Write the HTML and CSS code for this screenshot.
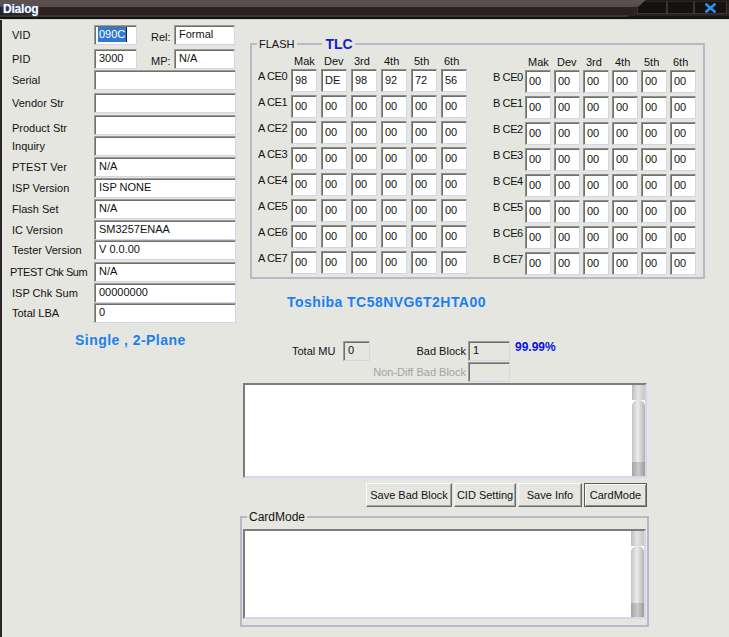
FILE: index.html
```html
<!DOCTYPE html>
<html lang="en">
<head>
  <meta charset="UTF-8">
  <title>Dialog</title>
  <link rel="stylesheet" href="styles.css">
</head>
<body>
  <div class="window">
    <div class="titlebar">
      <span class="title">Dialog</span>
      <div class="caption">
        <span class="cbtn min"></span>
        <span class="cbtn max"></span>
        <span class="cbtn close">
          <svg width="11" height="10" viewBox="0 0 11 10"><path d="M1.5 1.5 L9.5 8.5 M9.5 1.5 L1.5 8.5" stroke="#2a90e8" stroke-width="2.6" stroke-linecap="square"/></svg>
        </span>
      </div>
    </div>

    <div class="client">
      <!-- device info column -->
      <div class="info">
        <div class="form">
          <span class="lbl">VID</span>
          <div class="pair">
            <span class="field vid"><span class="sel">090C</span></span>
            <span class="sub">Rel:</span>
            <span class="field rel">Formal</span>
          </div>
          <span class="lbl">PID</span>
          <div class="pair">
            <span class="field vid">3000</span>
            <span class="sub">MP:</span>
            <span class="field rel">N/A</span>
          </div>
          <span class="lbl">Serial</span><span class="field"></span>
          <span class="lbl">Vendor Str</span><span class="field"></span>
          <span class="lbl low">Product Str</span><span class="field"></span>
          <span class="lbl">Inquiry</span><span class="field"></span>
          <span class="lbl">PTEST Ver</span><span class="field">N/A</span>
          <span class="lbl">ISP Version</span><span class="field">ISP NONE</span>
          <span class="lbl">Flash Set</span><span class="field">N/A</span>
          <span class="lbl">IC Version</span><span class="field">SM3257ENAA</span>
          <span class="lbl">Tester Version</span><span class="field">V 0.0.00</span>
          <span class="lbl shift">PTEST Chk Sum</span><span class="field">N/A</span>
          <span class="lbl">ISP Chk Sum</span><span class="field">00000000</span>
          <span class="lbl">Total LBA</span><span class="field">0</span>
        </div>
        <div class="mode">Single , 2-Plane</div>
      </div>

      <!-- flash / log column -->
      <div class="main">
        <fieldset class="flash">
          <legend><span>FLASH</span><span class="rule"></span><span class="tlc">TLC</span></legend>
          <div class="flash-body">
            <div class="ce-grid a" id="gridA"></div>
            <div class="ce-grid b" id="gridB"></div>
          </div>
        </fieldset>

        <div class="chip">Toshiba TC58NVG6T2HTA00</div>

        <div class="status-row">
          <span class="st-lbl mu">Total MU</span>
          <span class="field grey mu-box">0</span>
          <span class="st-lbl bb">Bad Block</span>
          <span class="field grey bb-box">1</span>
          <span class="pct">99.99%</span>
        </div>
        <div class="status-row second">
          <span class="st-lbl bb off">Non-Diff Bad Block</span>
          <span class="field grey bb-box"></span>
        </div>

        <div class="memo log">
          <div class="memo-text"></div>
          <div class="vscroll"><span class="up"></span><span class="thumb"></span><span class="down"></span></div>
        </div>

        <div class="btns">
          <button class="btn w86">Save Bad Block</button>
          <button class="btn w62">CID Setting</button>
          <button class="btn w64">Save Info</button>
          <button class="btn w63 default">CardMode</button>
        </div>

        <fieldset class="cardmode">
          <legend>CardMode</legend>
          <div class="memo card">
            <div class="memo-text"></div>
            <div class="vscroll"><span class="up"></span><span class="thumb"></span><span class="down"></span></div>
          </div>
        </fieldset>
      </div>
    </div>
  </div>

  <script>
    // flash id table, chip select 0 has the real id bytes
    var heads = ['Mak', 'Dev', '3rd', '4th', '5th', '6th'];
    var ce0 = ['98', 'DE', '98', '92', '72', '56'];

    function buildGrid(el, side, first) {
      var html = '<span></span>';
      heads.forEach(function (h) { html += '<span class="hd">' + h + '</span>'; });
      for (var r = 0; r < 8; r++) {
        html += '<span class="ce">' + side + ' CE' + r + '</span>';
        for (var c = 0; c < 6; c++) {
          var v = (r === 0 && first) ? first[c] : '00';
          html += '<span class="cell">' + v + '</span>';
        }
      }
      el.innerHTML = html;
    }

    buildGrid(document.getElementById('gridA'), 'A', ce0);
    buildGrid(document.getElementById('gridB'), 'B', null);
  </script>
</body>
</html>
```

FILE: styles.css
```css
* {
  box-sizing: border-box;
}

body {
  margin: 0;
  background: #e6e6e1;
  font-family: "Liberation Sans", Arial, sans-serif;
  font-size: 11px;
  color: #111;
}

.window {
  width: 729px;
  height: 637px;
  overflow: hidden;
}

/* title bar */
.titlebar {
  height: 20px;
  display: flex;
  background: linear-gradient(#5d5352 0, #564b4a 7px, #2f2424 7px, #291f1f 15px, #3d3331 15px, #3d3331 17px, #161212 17px, #161212 19px, #cfcfcb 19px);
}

.title {
  padding: 1px 0 0 3px;
  color: #fff;
  font-size: 12px;
  font-weight: bold;
  line-height: 16px;
  letter-spacing: -0.2px;
  text-shadow: 0 0 2px #4f8de0;
}

.caption {
  margin-left: auto;
  width: 104px;
  height: 19px;
  display: flex;
  align-items: flex-start;
  padding: 1px 2px 0 12px;
  background: linear-gradient(#231c1c, #2e2525 15px, #161212 17px);
  clip-path: polygon(21px 0, 100% 0, 100% 100%, 0 100%);
}

.cbtn {
  height: 13px;
  border: 1px solid #3a3434;
  border-top-color: #2a2424;
  background: #151212;
}

.cbtn.min {
  width: 30px;
}

.cbtn.max {
  width: 28px;
}

.cbtn.close {
  width: 33px;
  display: flex;
  align-items: center;
  justify-content: center;
}

/* client area */
.client {
  display: flex;
  height: 617px;
  border-left: 2px solid #2a2424;
}

.info {
  width: 238px;
  padding: 5px 0 0 10px;
}

.form {
  display: grid;
  grid-template-columns: 82px 142px;
  grid-template-rows: 24px 21px 23px 22px 21px 21px 21px 21px 21px 20px 22px 21px 20px 20px;
}

.lbl {
  line-height: 20px;
  white-space: nowrap;
}

.lbl.low {
  padding-top: 3px;
}

.lbl.shift {
  margin-left: -2px;
  letter-spacing: -0.5px;
}

.pair {
  display: flex;
  align-items: flex-start;
}

.sub {
  width: 23px;
  margin-left: 14px;
  padding-top: 2px;
  line-height: 20px;
}

.field {
  display: block;
  height: 20px;
  padding-left: 4px;
  background: #fff;
  border: 1px solid;
  border-color: #9c9c98 #d4d4ec #d4d4ec #9c9c98;
  box-shadow: inset 1px 1px 0 #6f6f6b;
  line-height: 17px;
  white-space: nowrap;
  overflow: hidden;
}

.field.vid {
  width: 43px;
}

.field.rel {
  width: 61px;
}

.sel {
  display: inline-block;
  margin-left: -1px;
  padding: 0 1px;
  background: #2f79d2;
  color: #fff;
  line-height: 15px;
  border-right: 1px solid #222;
}

.mode,
.chip {
  color: #1b7ff2;
  font-size: 14px;
  font-weight: bold;
  letter-spacing: 0.45px;
  line-height: 18px;
}

.mode {
  margin: 8px 0 0 63px;
}

.main {
  width: 489px;
  display: flex;
  flex-direction: column;
}

/* flash id group */
fieldset {
  margin: 0;
  min-width: 0;
  border: 2px solid #b8b8c8;
}

.flash {
  width: 455px;
  margin: 16px 0 0 10px;
  padding: 0 7px 2px 6px;
}

.flash legend {
  display: flex;
  align-items: center;
  margin-left: -1px;
  padding: 0 2px;
  line-height: 16px;
}

.rule {
  width: 25px;
  height: 2px;
  margin: 0 3px;
  background: #b8b8c8;
}

.tlc {
  color: #1a1ac8;
  font-size: 14px;
  font-weight: bold;
}

.flash-body {
  display: flex;
  align-items: flex-start;
}

.ce-grid {
  display: grid;
  grid-template-rows: 14px repeat(8, 23px);
  row-gap: 3px;
}

.ce-grid.a {
  grid-template-columns: 29px repeat(6, 26px);
  column-gap: 4px;
}

.ce-grid.b {
  grid-template-columns: 29px repeat(6, 26px);
  column-gap: 3px;
  margin: 1px 0 0 26px;
}

.hd {
  margin-top: 2px;
  padding-left: 3px;
  line-height: 14px;
}

.ce {
  line-height: 14px;
  letter-spacing: -0.4px;
  white-space: nowrap;
}

.cell {
  height: 23px;
  padding-left: 3px;
  background: #fff;
  border: 1px solid;
  border-color: #8e8e8a #d4d4ec #d4d4ec #8e8e8a;
  box-shadow: inset 1px 1px 0 #6f6f6b;
  line-height: 21px;
}

.chip {
  margin: 14px 0 0 47px;
}

/* bad block status */
.status-row {
  display: flex;
  align-items: flex-start;
  margin-top: 30px;
  padding-left: 52px;
}

.status-row.second {
  margin-top: 1px;
  padding-left: 130px;
}

.st-lbl {
  line-height: 20px;
  white-space: nowrap;
}

.st-lbl.mu {
  width: 51px;
}

.st-lbl.bb {
  width: 98px;
  padding-right: 2px;
  text-align: right;
}

.st-lbl.off {
  color: #a3a3a3;
}

.field.grey {
  background: #e6e6e1;
}

.mu-box {
  width: 27px;
}

.bb-box {
  width: 42px;
}

.pct {
  margin: -1px 0 0 5px;
  color: #0a14e8;
  font-size: 12px;
  font-weight: bold;
  line-height: 14px;
}

/* multi line boxes */
.memo {
  display: flex;
  background: #fff;
  border: 2px solid;
  border-color: #7c7c78 #d6d6ee #d6d6ee #7c7c78;
}

.memo-text {
  flex: 1;
}

.memo.log {
  width: 404px;
  height: 95px;
  margin: 1px 0 0 3px;
}

.vscroll {
  width: 13px;
  display: flex;
  flex-direction: column;
}

.vscroll .up {
  height: 15px;
  background: linear-gradient(to right, #bdbdbd, #e4e4e4 45%, #c6c6c6);
}

.vscroll .thumb {
  flex: 1;
  border-radius: 6px 6px 0 0;
  background: linear-gradient(to right, #c4c4c4, #ececec 45%, #b4b4b4);
}

.vscroll .down {
  height: 14px;
  background: linear-gradient(to right, #a4a4a4, #cacaca 50%, #9c9c9c);
}

.btns {
  display: flex;
  justify-content: flex-end;
  gap: 2px;
  width: 404px;
  margin: 5px 0 0 3px;
}

.btn {
  height: 24px;
  padding: 0;
  background: #e6e6e1;
  border: 1px solid;
  border-color: #fafafa #6a6a68 #6a6a68 #fafafa;
  box-shadow: inset -1px -1px 0 #a5a5a1;
  font-family: "Liberation Sans", Arial, sans-serif;
  font-size: 11px;
  color: #111;
  line-height: 20px;
}

.btn.default {
  border-color: #5c5c5a;
  box-shadow: inset 1px 1px 0 #fafafa, inset -1px -1px 0 #8a8a86;
}

.w86 {
  width: 86px;
}

.w62 {
  width: 62px;
}

.w64 {
  width: 64px;
}

.w63 {
  width: 63px;
}

/* card mode group */
.cardmode {
  width: 409px;
  margin-top: 3px;
  padding: 0 1px 6px 1px;
}

.cardmode legend {
  margin-left: 4px;
  padding: 0 2px;
  line-height: 14px;
  font-size: 12px;
}

.memo.card {
  height: 90px;
  margin-top: 5px;
}
```
